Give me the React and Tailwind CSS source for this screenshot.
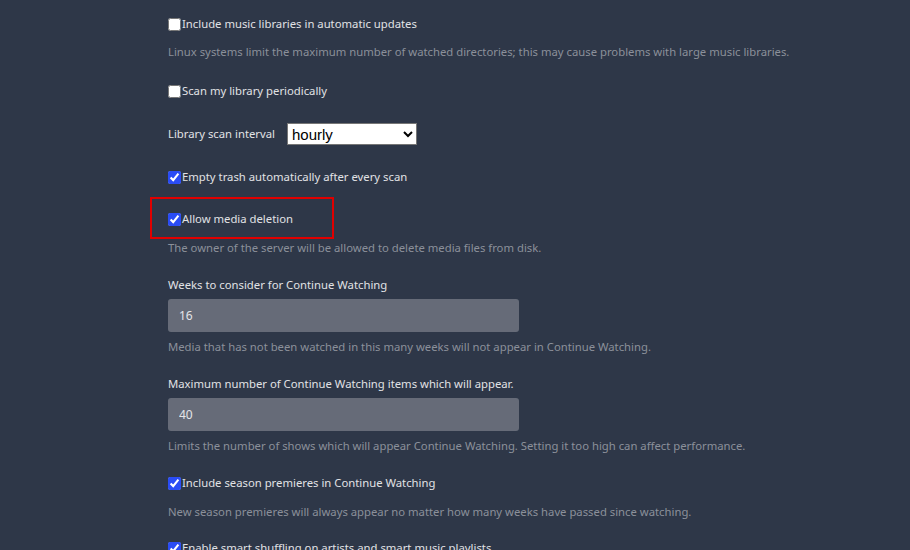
import { useState } from "react";

function Check({ label, checked: init = false, className = "" }) {
  const [checked, setChecked] = useState(init);
  return (
    <label className={`flex items-center h-[18px] text-[#e1e2e5] ${className}`}>
      <input
        type="checkbox"
        checked={checked}
        onChange={(e) => setChecked(e.target.checked)}
        className="w-[13px] h-[13px] accent-[#2a4cf5]"
      />
      <span className="ml-[1px]">{label}</span>
    </label>
  );
}

function Desc({ children, className = "" }) {
  return <p className={`h-[18px] leading-[18px] text-[#8b909a] ${className}`}>{children}</p>;
}

function NumberField({ label, value, className = "" }) {
  return (
    <div className={className}>
      <div className="h-[18px] leading-[18px] text-[#e1e2e5]">{label}</div>
      <input
        type="text"
        defaultValue={value}
        className="mt-[5px] w-[351px] h-[33px] rounded-[3px] bg-[#666b78] pl-[11px] text-[12px] text-[#e4e5e8] outline-none"
      />
    </div>
  );
}

export default function App() {
  return (
    <div className="min-h-screen bg-[#2e3748] font-['Noto_Sans',sans-serif] text-[11.3px] leading-[18px] overflow-hidden">
      <div className="pl-[168px] pt-[15px]">
        <Check label="Include music libraries in automatic updates" />
        <Desc className="mt-[10px]">
          Linux systems limit the maximum number of watched directories; this may cause problems with large music libraries.
        </Desc>

        <Check label="Scan my library periodically" className="mt-[21px]" />

        <div className="mt-[23px] flex items-center h-[22px]">
          <span className="w-[119px] text-[#e1e2e5]">Library scan interval</span>
          <select
            defaultValue="hourly"
            className="w-[130px] h-[22px] bg-white text-black border border-[#767676] font-['Liberation_Sans',sans-serif] text-[15px]"
          >
            <option value="hourly">hourly</option>
            <option value="daily">daily</option>
            <option value="weekly">weekly</option>
          </select>
        </div>

        <Check label="Empty trash automatically after every scan" checked className="mt-[23px]" />

        <div className="relative mt-[24px]">
          <Check label="Allow media deletion" checked />
          <span className="absolute left-[-18px] top-[-13px] w-[184px] h-[42px] border-2 border-[#e00000] pointer-events-none" />
        </div>
        <Desc className="mt-[11px]">The owner of the server will be allowed to delete media files from disk.</Desc>

        <NumberField label="Weeks to consider for Continue Watching" value="16" className="mt-[19px]" />
        <Desc className="mt-[6px]">Media that has not been watched in this many weeks will not appear in Continue Watching.</Desc>

        <NumberField
          label="Maximum number of Continue Watching items which will appear."
          value="40"
          className="mt-[19px]"
        />
        <Desc className="mt-[6px]">
          Limits the number of shows which will appear Continue Watching. Setting it too high can affect performance.
        </Desc>

        <Check label="Include season premieres in Continue Watching" checked className="mt-[19px]" />
        <Desc className="mt-[11px]">
          New season premieres will always appear no matter how many weeks have passed since watching.
        </Desc>

        <Check label="Enable smart shuffling on artists and smart music playlists" checked className="mt-[18px]" />
        <Desc className="mt-[11px]">Shuffles are weighted towards music you have not listened to recently.</Desc>
      </div>
    </div>
  );
}
